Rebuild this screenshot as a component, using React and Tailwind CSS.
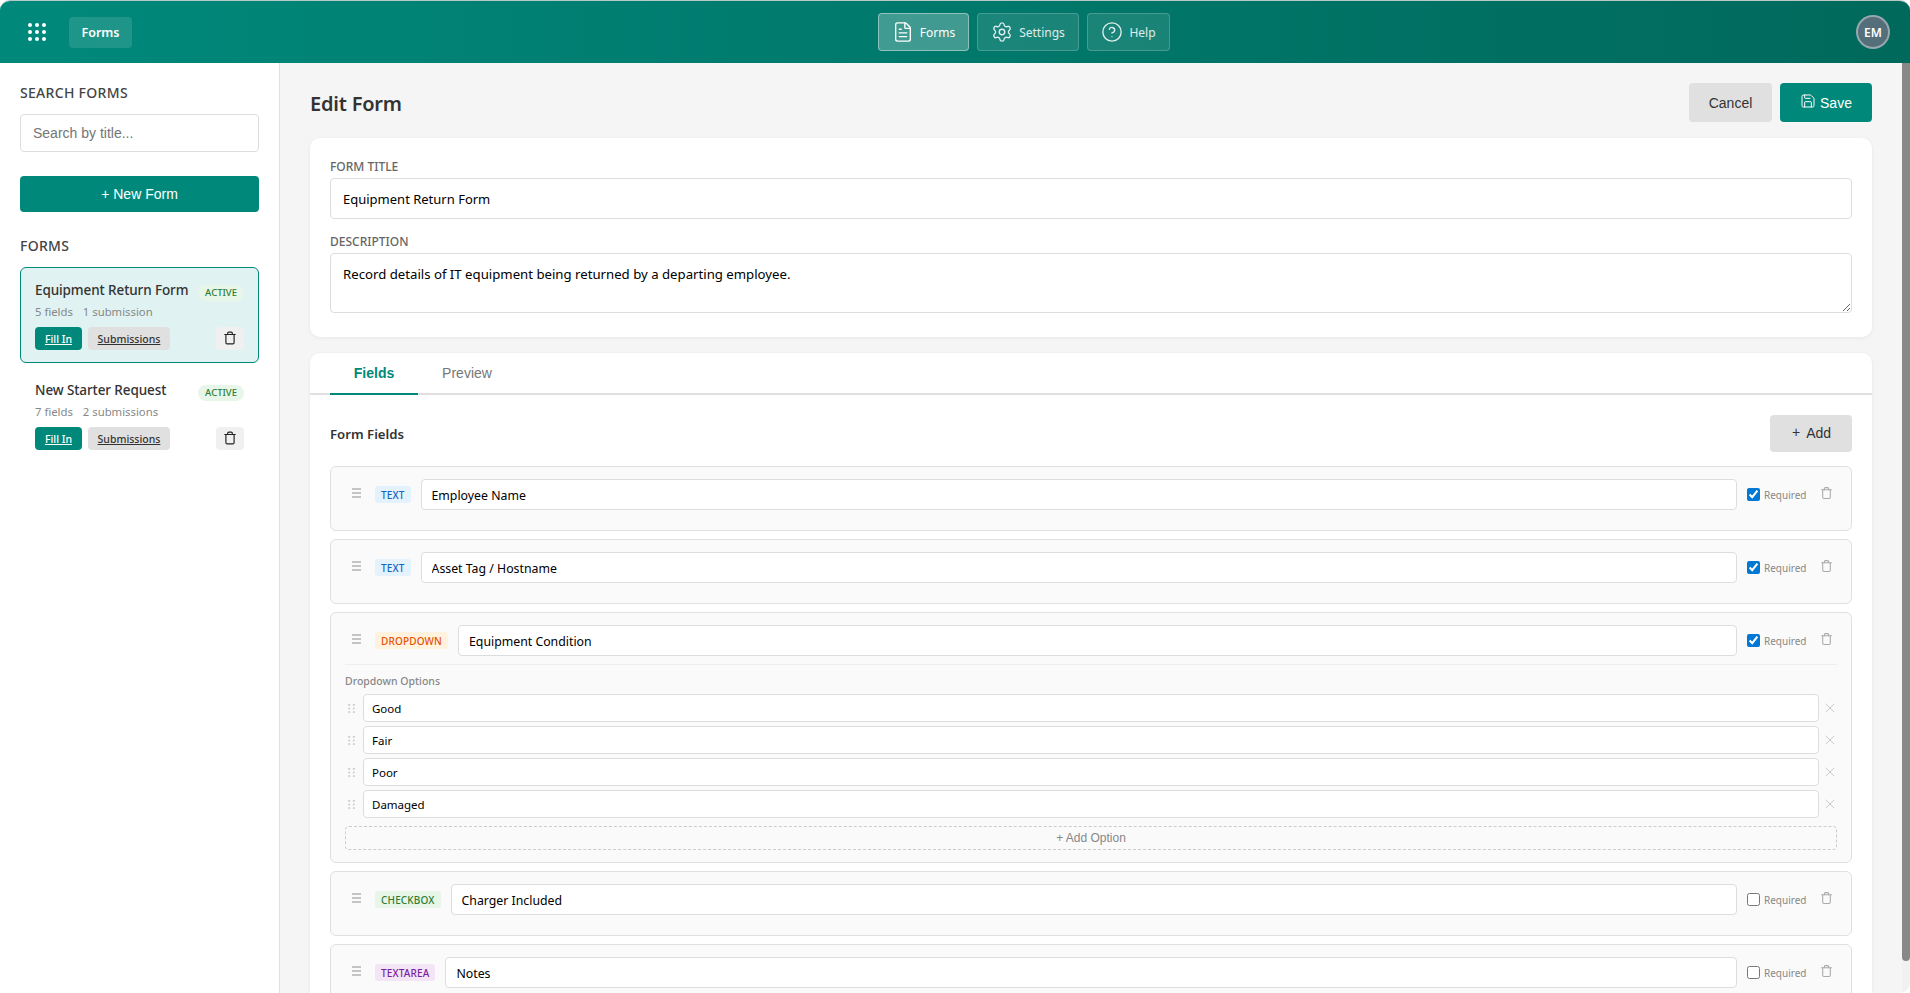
import React from "react";
import { FileText, Settings, CircleHelp, Save, Trash, X } from "lucide-react";

const ARIAL = "font-['Liberation_Sans',Arial,sans-serif]";

function GridDots() {
  const pts = [2, 9, 16];
  return (
    <svg width="18" height="18" viewBox="0 0 18 18" fill="#ffffff">
      {pts.map((y) => pts.map((x) => <circle key={`${x}-${y}`} cx={x} cy={y} r="2" />))}
    </svg>
  );
}

function DragBars() {
  return (
    <svg width="9" height="10" viewBox="0 0 9 10" fill="#c4c4c4" className="shrink-0">
      <rect x="0" y="0" width="9" height="2" />
      <rect x="0" y="4" width="9" height="2" />
      <rect x="0" y="8" width="9" height="2" />
    </svg>
  );
}

function GripDots() {
  return (
    <svg width="7" height="9" viewBox="0 0 7 9" fill="#cfcfcf" className="shrink-0">
      {[1, 4.5, 8].map((y) => [1.2, 5.8].map((x) => <circle key={`${x}-${y}`} cx={x} cy={y} r="1.1" />))}
    </svg>
  );
}

function SideCard({ title, meta1, meta2, selected }) {
  return (
    <div
      className={
        selected
          ? "h-24 rounded-md border border-[#00897b] bg-[#e0f2f1] px-[14px] pt-[12px]"
          : "h-24 rounded-md border border-transparent bg-white px-[14px] pt-[12px]"
      }
    >
      <div className="flex h-[20px] items-center justify-between">
        <span className="text-[13.5px] font-medium leading-[20px] tracking-[-0.1px] text-[#333333]">{title}</span>
        <span className="mt-[5px] rounded-[10px] bg-[#e8f5e9] px-[7px] text-[9.5px] font-medium leading-[16px] text-[#2e7d32]">
          ACTIVE
        </span>
      </div>
      <div className="mt-[3px] flex gap-[10px] text-[11.3px] leading-[18px] text-[#888888]">
        <span>{meta1}</span>
        <span>{meta2}</span>
      </div>
      <div className="mt-[6px] flex items-center gap-[6px]">
        <a className="flex h-[23px] w-[47px] items-center justify-center rounded-[4px] bg-[#00897b] pt-[2px] text-[10.5px] font-medium text-white underline">
          Fill In
        </a>
        <a className="flex h-[23px] w-[82px] items-center justify-center rounded-[4px] bg-[#e0e0e0] pt-[2px] text-[10.5px] font-medium text-[#333333] underline">
          Submissions
        </a>
        <button className="ml-auto flex h-[23px] w-[28px] items-center justify-center rounded-[4px] bg-[#f0f0f0] pb-[1px] text-[#222222]">
          <Trash size={14} strokeWidth={2} />
        </button>
      </div>
    </div>
  );
}

function FieldRow({ badge, badgeClass, label, required }) {
  return (
    <div className="flex h-[31px] items-center">
      <div className="flex w-[30px] shrink-0 justify-start pb-[3px] pl-[7px]">
        <DragBars />
      </div>
      <span className={`rounded-[3px] px-[6px] pt-[1px] text-[10px] font-medium leading-[16px] tracking-[0.15px] ${badgeClass}`}>
        {badge}
      </span>
      <input
        readOnly
        value={label}
        className="ml-[10px] h-[31px] min-w-0 flex-1 rounded-[4px] border border-[#dddddd] bg-white px-[10px] pt-[2px] text-[12.3px] text-black outline-none"
      />
      <label className="ml-[10px] flex w-[59px] shrink-0 items-center gap-[4px] text-[10px] text-[#888888]">
        <input type="checkbox" readOnly checked={!!required} className="m-0 h-[13px] w-[13px] accent-[#0078d4]" />
        <span className="pt-[2px]">Required</span>
      </label>
      <button className="ml-[14px] flex w-[13px] shrink-0 justify-center pb-[3px] text-[#aaaaaa]">
        <Trash size={16} strokeWidth={2} />
      </button>
      <div className="w-[4px] shrink-0" />
    </div>
  );
}

function Option({ value }) {
  return (
    <div className="flex h-[28px] items-center">
      <div className="flex w-[18px] shrink-0 justify-start pl-[3px]">
        <GripDots />
      </div>
      <input
        readOnly
        value={value}
        className="h-[28px] min-w-0 flex-1 rounded-[4px] border border-[#dddddd] bg-white px-[8px] text-[11.5px] text-black outline-none"
      />
      <button className="-mr-[1px] flex w-[19px] shrink-0 justify-end pb-[1px] text-[#cccccc]">
        <X size={16} strokeWidth={1.5} />
      </button>
    </div>
  );
}

function FieldCard({ children }) {
  return (
    <div className="h-[65px] rounded-md border border-[#e0e0e0] bg-[#fafafa] px-[14px] pt-[12px]">{children}</div>
  );
}

export default function App() {
  return (
    <div className="flex h-screen flex-col overflow-hidden rounded-[10px] border-t border-[#b8c8c6] bg-white font-['Noto_Sans',sans-serif]">
      <header className="flex h-[62px] shrink-0 items-center bg-gradient-to-r from-[#00897b] to-[#00695c] pl-[28px] pr-[20px]">
        <GridDots />
        <span className="ml-[23px] flex h-[31px] w-[63px] items-center justify-center rounded-[4px] bg-white/[0.12] pt-[2px] text-[12.5px] font-semibold text-white">
          Forms
        </span>
        <nav className="ml-[746px] flex h-[38px] gap-[8px]">
          <a className="flex w-[91px] items-center justify-center gap-[6px] rounded-[4px] border border-white/40 bg-white/25 text-[12px] text-white">
            <FileText size={22} strokeWidth={1.5} />
            <span className="pt-[2px]">Forms</span>
          </a>
          <a className="flex w-[102px] items-center justify-center gap-[6px] rounded-[4px] border border-white/20 bg-white/10 text-[12px] text-white/85">
            <Settings size={22} strokeWidth={1.5} />
            <span className="pt-[2px]">Settings</span>
          </a>
          <a className="flex w-[83px] items-center justify-center gap-[6px] rounded-[4px] border border-white/20 bg-white/10 text-[12px] text-white/85">
            <CircleHelp size={22} strokeWidth={1.5} />
            <span className="pt-[2px]">Help</span>
          </a>
        </nav>
        <div className="ml-auto flex h-[34px] w-[34px] items-center justify-center rounded-full border-2 border-white/40 bg-[#546e7a] pt-[2px] text-[12px] font-semibold text-white">
          EM
        </div>
      </header>

      <div className="flex min-h-0 flex-1">
        <aside className="w-[280px] shrink-0 border-r border-[#e0e0e0] bg-white px-[20px] pt-[20px]">
          <h2 className="text-[14px] font-medium leading-[20px] tracking-[0.3px] text-[#444444]">SEARCH FORMS</h2>
          <input
            placeholder="Search by title..."
            className={`mt-[11px] h-[38px] w-full rounded-[4px] border border-[#dddddd] bg-white px-[12px] text-[14px] outline-none placeholder:text-[#757575] ${ARIAL}`}
          />
          <button className={`mt-[24px] h-[36px] w-full rounded-[4px] bg-[#00897b] text-[14px] text-white ${ARIAL}`}>
            + New Form
          </button>
          <h2 className="mt-[24px] text-[14px] font-medium leading-[20px] tracking-[0.3px] text-[#444444]">FORMS</h2>
          <div className="mt-[11px] flex flex-col gap-[4px]">
            <SideCard title="Equipment Return Form" meta1="5 fields" meta2="1 submission" selected />
            <SideCard title="New Starter Request" meta1="7 fields" meta2="2 submissions" />
          </div>
        </aside>

        <main className="min-w-0 flex-1 overflow-hidden bg-[#f5f5f5] px-[30px] pt-[20px]">
          <div className="flex h-[39px] items-center justify-between">
            <h1 className="pt-[2px] text-[20px] font-semibold tracking-[-0.2px] text-[#333333]">Edit Form</h1>
            <div className="flex gap-[8px]">
              <button className={`h-[39px] w-[83px] rounded-[4px] bg-[#e0e0e0] pt-[2px] text-[14px] text-[#333333] ${ARIAL}`}>
                Cancel
              </button>
              <button className={`flex h-[39px] w-[92px] items-center justify-center gap-[4px] rounded-[4px] bg-[#00897b] text-[14px] text-white ${ARIAL}`}>
                <Save size={16} strokeWidth={1.5} className="mb-[3px]" />
                <span className="mt-[1px]">Save</span>
              </button>
            </div>
          </div>

          <section className="mt-[16px] h-[199px] rounded-[10px] bg-white px-[20px] pt-[20px] shadow-[0_1px_4px_rgba(0,0,0,0.06)]">
            <label className="block pt-[1px] text-[12px] font-medium leading-[15px] text-[#666666]">FORM TITLE</label>
            <input
              readOnly
              value="Equipment Return Form"
              className="mt-[4px] block h-[41px] w-full rounded-[4px] border border-[#dddddd] bg-white px-[12px] text-[13px] text-black outline-none"
            />
            <label className="mt-[14px] block pt-[1px] text-[12px] font-medium leading-[15px] text-[#666666]">DESCRIPTION</label>
            <textarea
              readOnly
              value="Record details of IT equipment being returned by a departing employee."
              className="mt-[4px] block h-[60px] w-full rounded-[4px] border border-[#dddddd] bg-white px-[12px] pb-[10px] pt-[11px] text-[13.2px] leading-[18px] text-black outline-none"
            />
          </section>

          <section className="mt-[16px] h-[800px] rounded-[10px] bg-white shadow-[0_1px_4px_rgba(0,0,0,0.06)]">
            <div className="flex h-[42px] border-b-2 border-[#e0e0e0] px-[20px]">
              <button className={`h-[42px] w-[88px] border-b-2 border-[#00897b] text-[14px] font-bold text-[#00897b] ${ARIAL}`}>
                Fields
              </button>
              <button className={`h-[40px] w-[98px] text-[14px] text-[#777777] ${ARIAL}`}>Preview</button>
            </div>

            <div className="px-[20px] pt-[20px]">
              <div className="flex h-[37px] items-center justify-between">
                <h3 className="pt-[2px] text-[13.2px] font-semibold text-[#333333]">Form Fields</h3>
                <button className={`flex h-[37px] w-[82px] items-center justify-center gap-[6px] rounded-[4px] bg-[#e0e0e0] text-[14px] text-[#333333] ${ARIAL}`}>
                  <span className="mb-[2px] ml-[1px]">+</span>
                  <span>Add</span>
                </button>
              </div>

              <div className="mt-[14px] flex flex-col gap-[8px]">
                <FieldCard>
                  <FieldRow badge="TEXT" badgeClass="bg-[#e3f2fd] text-[#1565c0]" label="Employee Name" required />
                </FieldCard>
                <FieldCard>
                  <FieldRow badge="TEXT" badgeClass="bg-[#e3f2fd] text-[#1565c0]" label="Asset Tag / Hostname" required />
                </FieldCard>
                <div className="h-[251px] rounded-md border border-[#e0e0e0] bg-[#fafafa] px-[14px] pt-[12px]">
                  <FieldRow badge="DROPDOWN" badgeClass="bg-[#fff3e0] text-[#e65100]" label="Equipment Condition" required />
                  <div className="mt-[8px] border-t border-[#eeeeee] pt-[8px]">
                    <div className="text-[10.5px] font-medium leading-[16px] text-[#888888]">Dropdown Options</div>
                    <div className="mt-[5px] flex flex-col gap-[4px]">
                      <Option value="Good" />
                      <Option value="Fair" />
                      <Option value="Poor" />
                      <Option value="Damaged" />
                    </div>
                    <button className={`mt-[8px] h-[24px] w-full rounded-[4px] border border-dashed border-[#cccccc] text-[12px] text-[#888888] ${ARIAL}`}>
                      + Add Option
                    </button>
                  </div>
                </div>
                <FieldCard>
                  <FieldRow badge="CHECKBOX" badgeClass="bg-[#e8f5e9] text-[#2e7d32]" label="Charger Included" />
                </FieldCard>
                <FieldCard>
                  <FieldRow badge="TEXTAREA" badgeClass="bg-[#f3e5f5] text-[#7b1fa2]" label="Notes" />
                </FieldCard>
              </div>
            </div>
          </section>
        </main>

        <div className="w-[8px] shrink-0 bg-[#f1f1f1]">
          <div className="h-[898px] rounded-b-[4px] bg-[#888888]" />
        </div>
      </div>
    </div>
  );
}
